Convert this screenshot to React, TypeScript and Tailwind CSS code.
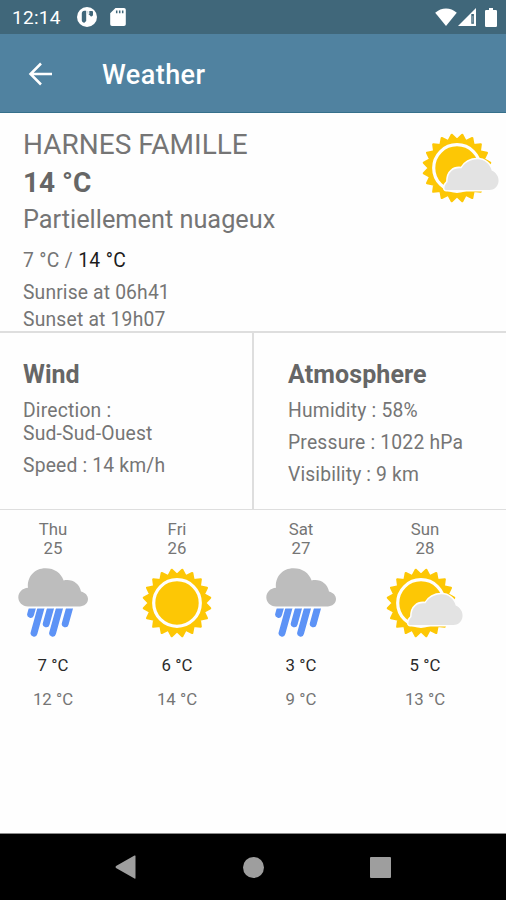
const forecast = [
  { day: "Thu", date: "25", icon: "rain", low: "7 °C", high: "12 °C" },
  { day: "Fri", date: "26", icon: "sun", low: "6 °C", high: "14 °C" },
  { day: "Sat", date: "27", icon: "rain", low: "3 °C", high: "9 °C" },
  { day: "Sun", date: "28", icon: "partly", low: "5 °C", high: "13 °C" },
];

// 20 rays around a centre of 35,35
const rays = Array.from({ length: 40 }, (_, i) => {
  const angle = (i * 9 * Math.PI) / 180;
  const r = i % 2 ? 33.6 : 28.2;
  return `${(35 + r * Math.sin(angle)).toFixed(2)},${(35 - r * Math.cos(angle)).toFixed(2)}`;
}).join(" ");

const SunShape = () => (
  <>
    <polygon points={rays} fill="#fdc705" stroke="#fdc705" strokeWidth="2.2" strokeLinejoin="round" />
    <circle cx="35" cy="35" r="23.3" fill="#fdc705" stroke="#fefefe" strokeWidth="3.2" />
  </>
);

const SunIcon = () => (
  <svg className="w-[70px] h-[70px]" viewBox="0 0 70 70">
    <SunShape />
  </svg>
);

const PartlyIcon = () => (
  <svg className="w-[78px] h-[70px]" viewBox="0 0 78 70">
    <SunShape />
    <path
      d="M24 57C21.5 57 22 52 25.5 49C25.5 44.5 26.5 40.5 29.5 38C32 35.5 36 34.8 39.5 35.3C42.5 30 48.5 26.3 55.5 26.3C62.5 26.3 68 31 69.7 37.5C74 39.5 77 43.5 76.5 48.5C76 53.8 72 57 67.5 57Z"
      fill="#e3e3e3"
      stroke="#fefefe"
      strokeWidth="3"
      strokeLinejoin="round"
      style={{ paintOrder: "stroke" }}
    />
  </svg>
);

const RainIcon = () => (
  <svg className="w-[70px] h-[70px]" viewBox="0 0 70 70">
    <clipPath id="drops">
      <rect x="0" y="40.6" width="70" height="30" />
    </clipPath>
    <path
      d="M10 38.4C4.3 38.4 .3 34.3 .3 29.3C.3 24.3 4.5 20.2 10 19.8C8.8 9 16.5 .3 27.5 .3C36.5 .3 43 5 45.6 12.5C54 10.5 61.5 15.5 63 23.5C67.3 24.6 70 27.5 70 31C70 35.3 66.3 38.4 61.5 38.4Z"
      fill="#bdbdbd"
    />
    <path
      d="M12.6 46.4L15 37.7M16 65.2L23.6 37.7M28.2 55.8L33.2 37.7M34.6 65.2L42.2 37.7M47.2 55.8L52.2 37.7"
      stroke="#5d93f6"
      strokeWidth="6.9"
      strokeLinecap="round"
      clipPath="url(#drops)"
    />
  </svg>
);

const StatusBar = () => (
  <div className="h-[34px] bg-[#40677a] flex items-center pl-[12px] pr-[9px] text-white">
    <span className="text-[19px] tracking-[0.3px] w-[65px] pt-[3px]">12:14</span>
    <svg className="w-[20px] h-[20px]" viewBox="0 0 20 20">
      <circle cx="10" cy="10" r="10" fill="#fff" />
      <path d="M9.2 3.8H7.4A3 3 0 0 0 4.8 7V12.5A3 3 0 0 0 7.4 15.8L9.2 14Z" fill="#40677a" />
      <path d="M10.8 4H15A1 1 0 0 1 16 5V7.5A1.6 1.6 0 0 1 13 8.5L10.8 6.5Z" fill="#40677a" />
      <path d="M11.7 4V7" stroke="#fff" strokeWidth="1.2" />
    </svg>
    <svg className="w-[16px] h-[18px] ml-[13px]" viewBox="0 0 16 18">
      <path d="M5.5 0H14A1.8 1.8 0 0 1 15.8 1.8V16.2A1.8 1.8 0 0 1 14 18H2A1.8 1.8 0 0 1 .2 16.2V5.3Z" fill="#fff" />
      <path d="M6.7 2.5V5.2M9.7 2.5V5.2M12.7 2.5V5.2" stroke="#40677a" strokeWidth="1.5" />
    </svg>
    <div className="flex items-center ml-auto">
      <svg className="w-[22px] h-[18px]" viewBox="0 0 22 18">
        <path d="M11 18L.2 4.8C6.5-1 15.5-1 21.8 4.8Z" fill="#fff" />
      </svg>
      <svg className="w-[18px] h-[18px] ml-[1px]" viewBox="0 0 18 18">
        <path d="M18 0V18H0Z" fill="#fff" />
        <path d="M14.6 6V15.8" stroke="#40677a" strokeWidth="2.6" />
        <path d="M14.8 8V14.5" stroke="#8fa7b3" strokeWidth="1" />
      </svg>
      <svg className="w-[12px] h-[19px] ml-[9px]" viewBox="0 0 12 19">
        <path d="M4 0H8V2H10.8A1.2 1.2 0 0 1 12 3.2V17.8A1.2 1.2 0 0 1 10.8 19H1.2A1.2 1.2 0 0 1 0 17.8V3.2A1.2 1.2 0 0 1 1.2 2H4Z" fill="#fff" />
      </svg>
    </div>
  </div>
);

const App = () => {
  return (
    <div className="w-[506px] h-[900px] flex flex-col bg-[#fefefe] font-['Roboto',sans-serif] text-[#757575] whitespace-nowrap overflow-hidden">
      <StatusBar />
      <header className="h-[79px] bg-[#5082a0] border-b border-[#36708b] flex items-center pl-[28px] text-white">
        <svg className="w-[24px] h-[24px] mt-[1px]" viewBox="0 0 24 24" fill="none" stroke="#fff" strokeWidth="2.5">
          <path d="M24 12H3M13 1.5L2.5 12L13 22.5" />
        </svg>
        <h1 className="ml-[50px] text-[27px] tracking-[0.45px] font-medium leading-[30px] pt-[4px]">Weather</h1>
      </header>

      <section className="h-[218px] pt-[13px] pl-[23px] pr-[6px] flex justify-between">
        <div>
          <p className="text-[28px] leading-[38px]">HARNES FAMILLE</p>
          <p className="text-[28px] leading-[38px] font-bold text-[#666666]">14 °C</p>
          <p className="text-[25.3px] leading-[36px]">Partiellement nuageux</p>
          <p className="text-[19.3px] leading-[32px] mt-[7px] tracking-[0.33px]">
            7 °C / <span className="text-[#1c1c1c]">14 °C</span>
          </p>
          <p className="text-[19.3px] leading-[27px] mt-[2px] tracking-[0.15px]">Sunrise at 06h41</p>
          <p className="text-[19.3px] leading-[25px] mt-[1px] tracking-[0.2px]">Sunset at 19h07</p>
        </div>
        <div className="pt-[7px]">
          <PartlyIcon />
        </div>
      </section>

      <section className="h-[179px] flex border-t-2 border-b border-[#dedede]">
        <div className="w-[254px] border-r-2 border-[#dedede] pl-[23px] pt-[27px]">
          <h2 className="text-[25px] leading-[30px] font-bold text-[#666666]">Wind</h2>
          <p className="text-[19.3px] leading-[23px] mt-[9px] tracking-[0.2px]">
            Direction :<br />
            Sud-Sud-Ouest
          </p>
          <p className="text-[19.3px] leading-[23px] mt-[9px] tracking-[0.18px]">Speed : 14 km/h</p>
        </div>
        <div className="pl-[34px] pt-[27px]">
          <h2 className="text-[25px] leading-[30px] font-bold text-[#666666] tracking-[0.1px]">Atmosphere</h2>
          <p className="text-[19.3px] leading-[23px] mt-[9px] tracking-[0.2px]">Humidity : 58%</p>
          <p className="text-[19.3px] leading-[23px] mt-[9px] tracking-[0.2px]">Pressure : 1022 hPa</p>
          <p className="text-[19.3px] leading-[23px] mt-[9px] tracking-[0.15px]">Visibility : 9 km</p>
        </div>
      </section>

      <section className="flex-1 flex gap-[46px] pl-[14px] pt-[9px]">
        {forecast.map((item) => (
          <div key={item.day} className="w-[78px] flex flex-col items-center text-[16.8px] leading-[20px]">
            <p>{item.day}</p>
            <p className="-mt-[1px]">{item.date}</p>
            <div className="mt-[10px]">
              {item.icon === "rain" && <RainIcon />}
              {item.icon === "sun" && <SunIcon />}
              {item.icon === "partly" && <PartlyIcon />}
            </div>
            <p className="mt-[17px] text-[#2a2a2a]">{item.low}</p>
            <p className="mt-[14px]">{item.high}</p>
          </div>
        ))}
      </section>

      <nav className="h-[67px] bg-black border-t border-[#8c8c8c] flex items-center justify-between pl-[115px] pr-[115px]">
        <svg className="w-[21px] h-[24px]" viewBox="0 0 21 24">
          <path d="M20.5 1V23Q20.5 24 19.5 23.4L1 13Q0 12 1 11L19.5.6Q20.5 0 20.5 1Z" fill="#9e9e9e" />
        </svg>
        <div className="w-[21px] h-[21px] rounded-full bg-[#9e9e9e]" />
        <div className="w-[21px] h-[21px] rounded-[1px] bg-[#9e9e9e]" />
      </nav>
    </div>
  );
};

export default App;
